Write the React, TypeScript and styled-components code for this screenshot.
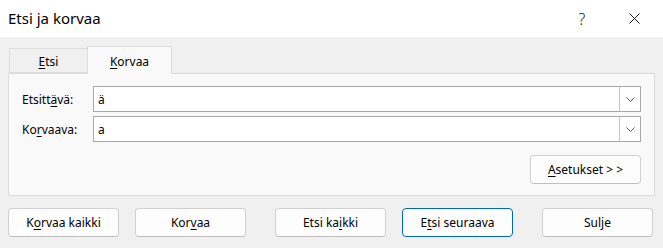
import styled, { createGlobalStyle } from 'styled-components'

const GlobalStyle = createGlobalStyle`
  html, body {
    margin: 0;
    padding: 0;
    background: #ffffff;
  }
  body {
    font-family: 'Noto Sans', 'Open Sans', sans-serif;
    color: #000;
  }
`

const Window = styled.div`
  width: 663px;
  height: 248px;
  background: #f0f0f0;
  display: flex;
  flex-direction: column;
  overflow: hidden;
`

const TitleBar = styled.div`
  height: 37px;
  background: #ffffff;
  display: flex;
  align-items: center;
  padding-left: 8px;
  flex-shrink: 0;
`

const Title = styled.div`
  font-size: 15px;
  flex: 1;
  padding-bottom: 1px;
`

const CaptionButton = styled.div<{ $w: number }>`
  width: ${(p) => p.$w}px;
  height: 37px;
  display: flex;
  align-items: center;
  justify-content: center;
  font-size: 16px;
  font-weight: 300;
  color: #1a1a1a;
`

const Body = styled.div`
  padding: 9px 8px 0 8px;
  display: flex;
  flex-direction: column;
`

const TabRow = styled.div`
  display: flex;
  align-items: flex-end;
  padding-left: 1px;
  height: 27px;
  position: relative;
  z-index: 1;
`

const Tab = styled.div<{ $active?: boolean; $w: number }>`
  width: ${(p) => p.$w}px;
  height: ${(p) => (p.$active ? 28 : 25)}px;
  margin-bottom: ${(p) => (p.$active ? -1 : 0)}px;
  box-sizing: border-box;
  background: ${(p) => (p.$active ? '#f9f9f9' : '#f0f0f0')};
  border: 1px solid #dcdcdc;
  border-bottom: ${(p) => (p.$active ? 'none' : '1px solid #dcdcdc')};
  margin-left: ${(p) => (p.$active ? -1 : 0)}px;
  display: flex;
  align-items: center;
  justify-content: center;
  font-size: 12px;
  padding-top: ${(p) => (p.$active ? 1 : 2)}px;
`

const Panel = styled.div`
  height: 123px;
  box-sizing: border-box;
  background: #f9f9f9;
  border: 1px solid #dcdcdc;
  padding: 12px 13px 0 13px;
  display: flex;
  flex-direction: column;
`

const FieldRow = styled.div`
  display: flex;
  align-items: center;
  height: 26px;
  & + & {
    margin-top: 4px;
  }
`

const Label = styled.div`
  width: 71px;
  font-size: 12px;
`

const Combo = styled.div`
  flex: 1;
  height: 26px;
  box-sizing: border-box;
  border: 1px solid #a8a8a8;
  background: #ffffff;
  display: flex;
  align-items: stretch;
`

const ComboText = styled.div`
  flex: 1;
  font-size: 12px;
  padding-left: 4px;
  display: flex;
  align-items: center;
`

const DropButton = styled.div`
  width: 20px;
  border-left: 1px solid #c4c4c4;
  display: flex;
  align-items: center;
  justify-content: center;
`

const OptionsRow = styled.div`
  display: flex;
  justify-content: flex-end;
  margin-top: 13px;
`

const Button = styled.div<{ $default?: boolean }>`
  width: 111px;
  height: 29px;
  box-sizing: border-box;
  border: 1px solid ${(p) => (p.$default ? '#0067c0' : '#d0d0d0')};
  border-bottom-color: ${(p) => (p.$default ? '#0067c0' : '#c0c0c0')};
  border-radius: 4px;
  background: #fdfdfd;
  display: flex;
  align-items: center;
  justify-content: center;
  font-size: 12px;
  padding-bottom: 1px;
`

const ButtonBar = styled.div`
  display: flex;
  gap: 29px;
  margin-top: 12px;
`

const ButtonGroup = styled.div`
  display: flex;
  gap: 16px;
`

const U = styled.span`
  text-decoration: underline;
  text-underline-offset: 2px;
`

function Chevron() {
  return (
    <svg width="9" height="5" viewBox="0 0 9 5">
      <path d="M0.5 0.5 L4.5 4.5 L8.5 0.5" fill="none" stroke="#606060" strokeWidth="1" />
    </svg>
  )
}

function CloseIcon() {
  return (
    <svg width="11" height="11" viewBox="0 0 11 11">
      <path d="M0.5 0.5 L10.5 10.5 M10.5 0.5 L0.5 10.5" stroke="#1a1a1a" strokeWidth="1" />
    </svg>
  )
}

export default function App() {
  return (
    <>
      <GlobalStyle />
      <Window>
        <TitleBar>
          <Title>Etsi ja korvaa</Title>
          <CaptionButton $w={46}>?</CaptionButton>
          <CaptionButton $w={58}>
            <CloseIcon />
          </CaptionButton>
        </TitleBar>
        <Body>
          <TabRow>
            <Tab $w={79}>
              <span>
                <U>E</U>tsi
              </span>
            </Tab>
            <Tab $w={85} $active>
              <span>
                <U>K</U>orvaa
              </span>
            </Tab>
          </TabRow>
          <Panel>
            <FieldRow>
              <Label>
                Etsitt<U>ä</U>vä:
              </Label>
              <Combo>
                <ComboText>ä</ComboText>
                <DropButton>
                  <Chevron />
                </DropButton>
              </Combo>
            </FieldRow>
            <FieldRow>
              <Label>
                Ko<U>r</U>vaava:
              </Label>
              <Combo>
                <ComboText>a</ComboText>
                <DropButton>
                  <Chevron />
                </DropButton>
              </Combo>
            </FieldRow>
            <OptionsRow>
              <Button>
                <span>
                  <U>A</U>setukset &gt; &gt;
                </span>
              </Button>
            </OptionsRow>
          </Panel>
          <ButtonBar>
            <ButtonGroup>
              <Button>
                <span>
                  K<U>o</U>rvaa kaikki
                </span>
              </Button>
              <Button>
                <span>
                  Kor<U>v</U>aa
                </span>
              </Button>
            </ButtonGroup>
            <ButtonGroup>
              <Button>
                <span>
                  Etsi ka<U>i</U>kki
                </span>
              </Button>
              <Button $default>
                <span>
                  E<U>t</U>si seuraava
                </span>
              </Button>
            </ButtonGroup>
            <Button>Sulje</Button>
          </ButtonBar>
        </Body>
      </Window>
    </>
  )
}
